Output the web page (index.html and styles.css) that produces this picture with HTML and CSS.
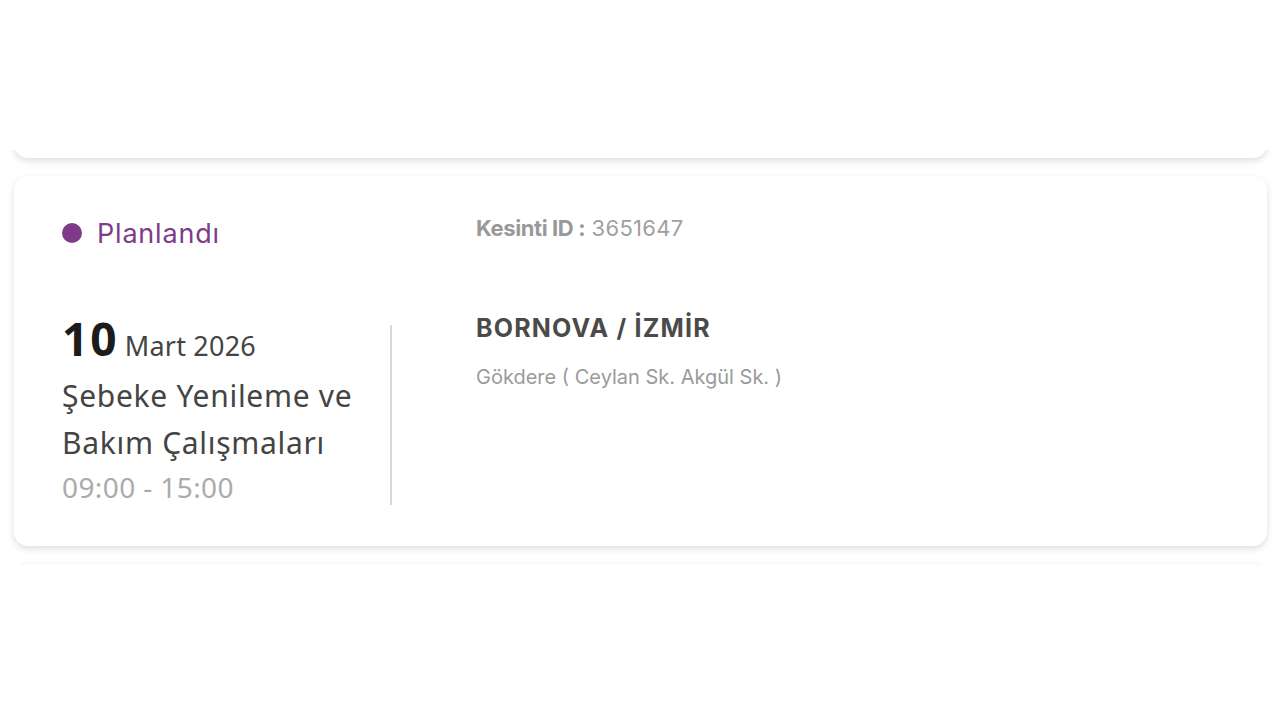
FILE: index.html
```html
<!DOCTYPE html>
<html lang="tr">
<head>
<meta charset="utf-8">
<title>Kesinti</title>
<link rel="stylesheet" href="styles.css">
</head>
<body>
<div class="viewport">
  <div class="list">
    <div class="card card-prev"></div>
    <div class="card card-main">
      <div class="status"><span class="dot"></span><span class="status-text">Planlandı</span></div>
      <div class="outage-id"><b>Kesinti ID :</b> 3651647</div>
      <div class="when">
        <div class="date"><span class="day">10</span> <span class="month">Mart 2026</span></div>
        <div class="reason">Şebeke Yenileme ve Bakım Çalışmaları</div>
        <div class="hours">09:00 - 15:00</div>
      </div>
      <div class="where">
        <div class="city">BORNOVA / İZMİR</div>
        <div class="streets">Gökdere ( Ceylan Sk. Akgül Sk. )</div>
      </div>
    </div>
    <div class="card card-next"></div>
  </div>
</div>
</body>
</html>
```
FILE: styles.css
```css
html, body {
  margin: 0;
  padding: 0;
  background: #ffffff;
  overflow: hidden;
}
.viewport {
  margin-top: 150px;
  height: 415px;
  overflow: hidden;
}
.list {
  display: flex;
  flex-direction: column;
  gap: 18px;
  padding: 0 13px 0 14px;
}
.card {
  background: #ffffff;
  border-radius: 14px;
  box-shadow: 0 3px 7px rgba(0, 0, 0, 0.13);
}
.card-prev {
  height: 100px;
  margin-top: -92px;
}
.card-next {
  height: 200px;
  box-shadow: 0 -1px 4px rgba(0, 0, 0, 0.05);
}
.card-main {
  display: grid;
  grid-template-columns: 330px 1fr;
  column-gap: 84px;
  grid-template-rows: auto auto;
  row-gap: 74px;
  padding: 44px 48px 36px 48px;
  height: 370px;
  box-sizing: border-box;
}
.status {
  display: flex;
  align-items: center;
  gap: 15px;
  height: 26px;
}
.dot {
  width: 20px;
  height: 20px;
  border-radius: 50%;
  background: #7e3b8a;
}
.status-text {
  font-family: "Inter", sans-serif;
  font-size: 27px;
  letter-spacing: 0.8px;
  color: #7e3b8a;
}
.outage-id {
  font-family: "Inter", sans-serif;
  font-size: 22px;
  letter-spacing: 0.3px;
  color: #a0a0a0;
  margin-top: -5px;
}
.outage-id b {
  font-weight: 700;
  color: #999999;
  letter-spacing: -0.4px;
}
.when {
  border-right: 2px solid #d9d9d9;
  font-family: "Noto Sans", sans-serif;
  color: #444444;
  height: 180px;
}
.date {
  line-height: 44px;
  margin-top: -9px;
  white-space: nowrap;
}
.day {
  font-size: 46px;
  font-weight: 700;
  letter-spacing: 2px;
  color: #1c1c1c;
}
.month {
  font-size: 27px;
  letter-spacing: 0.2px;
  margin-left: 2px;
  color: #444444;
}
.reason {
  font-size: 30px;
  line-height: 47px;
  letter-spacing: 0.7px;
  color: #444444;
  padding-right: 4px;
}
.hours {
  font-size: 28px;
  line-height: 42px;
  letter-spacing: 0.4px;
  color: #ababab;
}
.where {
  font-family: "Inter", sans-serif;
}
.city {
  font-size: 25px;
  font-weight: 700;
  letter-spacing: 1.2px;
  color: #4a4a4a;
  margin-top: -12px;
}
.streets {
  font-size: 20px;
  color: #9a9a9a;
  margin-top: 22px;
}
```
